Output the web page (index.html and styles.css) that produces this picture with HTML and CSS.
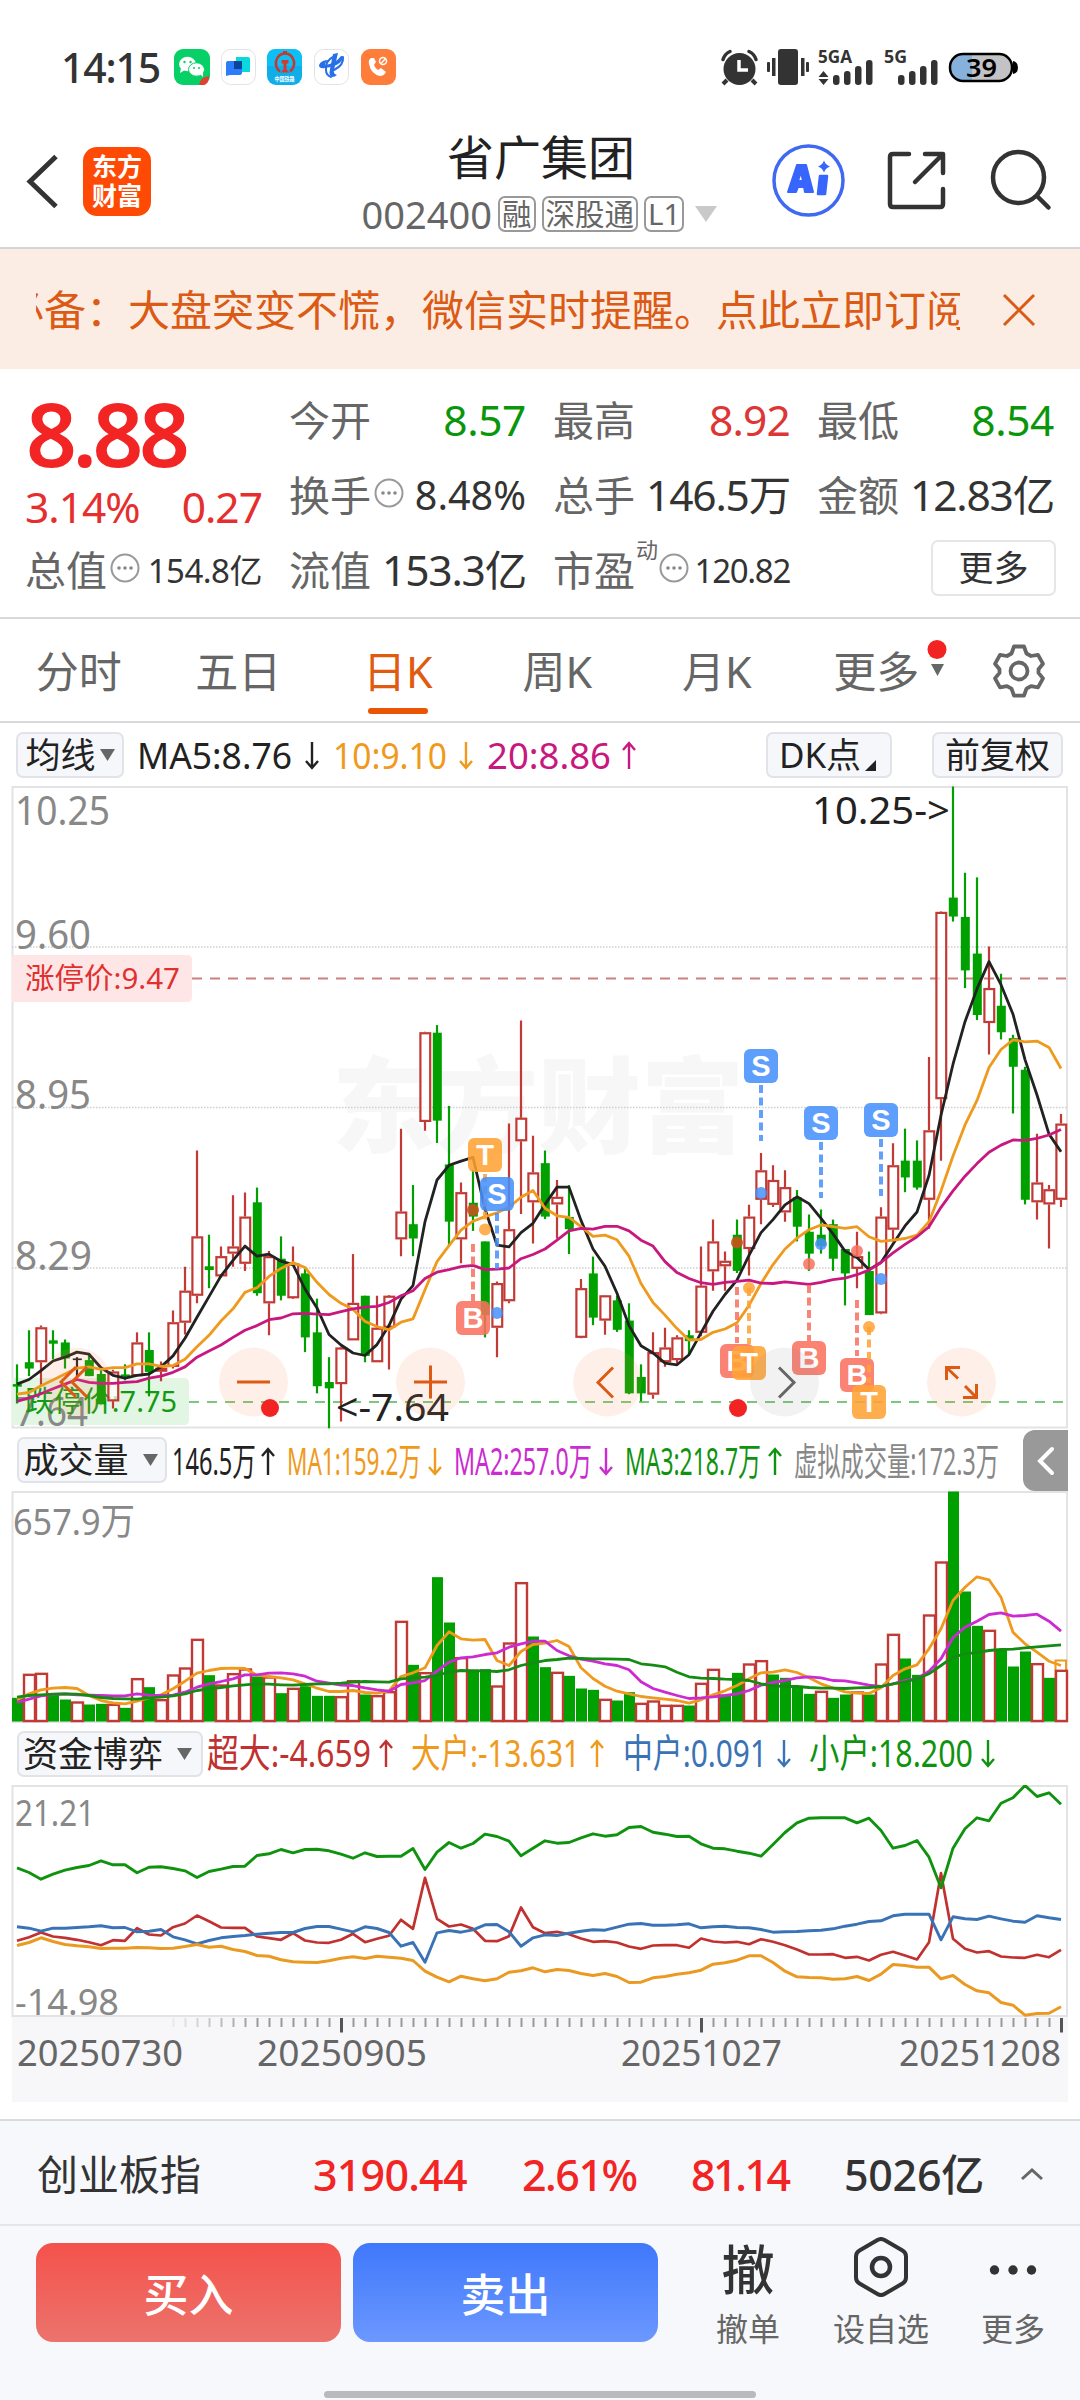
FILE: index.html
```html
<!DOCTYPE html>
<html lang="zh-CN">
<head>
<meta charset="utf-8">
<title>省广集团 002400</title>
<link rel="stylesheet" href="styles.css">
</head>
<body>
<div class="screen">

  <div class="status">
    <span class="clock">14:15</span>
    <svg class="apps" width="222" height="36" viewBox="174 49 222 36">
      <rect x="174" y="49" width="36" height="36" rx="9" fill="#06d066"/>
      <ellipse cx="187.500" cy="64" rx="8.500" ry="7.200" fill="#fff"/><path d="M181 68l-1 5 5-3z" fill="#fff"/>
      <circle cx="184.500" cy="62" r="1.200" fill="#06d066"/><circle cx="190.500" cy="62" r="1.200" fill="#06d066"/>
      <ellipse cx="196.500" cy="69.500" rx="8" ry="6.700" fill="#fff" stroke="#06d066" stroke-width="1"/><path d="M200 74l3 3v-5z" fill="#fff"/>
      <circle cx="194" cy="68" r="1" fill="#06d066"/><circle cx="199" cy="68" r="1" fill="#06d066"/>
      <path d="M199 85q1-8 10-9v2q-1 6-5 7z" fill="#e0402f"/>
      <rect x="221.500" y="49.500" width="34" height="35" rx="9" fill="#fff" stroke="#e3e3e5"/>
      <path d="M236 57h12q2 0 2 2v13h-14z" fill="#0bd8dc"/><path d="M228 61h14v12q0 2-2 2h-10l-4 1V63q0-2 2-2z" fill="#2c7dfb"/><path d="M234 61h8v8h-8z" fill="#07469c"/>
      <rect x="267" y="49" width="35" height="36" rx="9" fill="#10aee8"/><path d="M267 58q0-9 9-9h17q9 0 9 9v8h-35z" fill="#0cc0f5"/>
      <path d="M280 71.500q-5-4-4-10 2-8 9-8t9 8q1 6-4 10" fill="none" stroke="#c53a30" stroke-width="2.600"/><path d="M281.500 60h7v3.500h-2v6l3 3h-9l3-3v-6h-2z" fill="#d6392b"/><path d="M283 51h4v3h-4z" fill="#c53a30"/>
      <text x="274.500" y="80.500" font-size="6" font-weight="700" fill="#fff" textLength="20" lengthAdjust="spacingAndGlyphs">中国铁路</text>
      <rect x="314.500" y="49.500" width="34" height="35" rx="9" fill="#fff" stroke="#e3e3e5"/>
      <path d="M319 65q2-5 10-5-4 2-4 5 10-1 16-9 3 0 2 3-5 8-18 9-6 1-6-3z" fill="#2870ea"/>
      <path d="M343 57q1 8-9 13M333 57q-8 4-7 13 0 5 5 7" fill="none" stroke="#2870ea" stroke-width="2" stroke-linecap="round"/>
      <path d="M333 54l5-1-4 17q-1 4 3 5-5 4-7 0-1-2 0-6z" fill="#2870ea"/>
      <rect x="361" y="49" width="35" height="36" rx="9" fill="#ff7d3b"/>
      <path d="M371 58q-3 2-2 6 2 10 11 12 4 0 6-4l-5-4-3 2q-3-2-4-5l2-3-2-4z" fill="#fff"/><circle cx="383" cy="61" r="3.500" fill="none" stroke="#fff" stroke-width="1.500"/><path d="M381 63.500l4.500-5" stroke="#fff" stroke-width="1.300"/>
    </svg>
    <svg class="radio" width="308" height="40" viewBox="720 47 308 40">
      <g fill="#333">
        <circle cx="739.500" cy="69" r="16"/>
        <path d="M723 59.500q2-6 7-8M756 59.500q-2-6-7-8" fill="none" stroke="#333" stroke-width="3.500" stroke-linecap="round"/>
        <path d="M727 80l-4 4M752 80l4 4" stroke="#333" stroke-width="4"/>
        <path d="M739 60v10h9" stroke="#fff" stroke-width="3.500" fill="none"/>
        <rect x="778" y="49" width="20" height="36" rx="3"/><rect x="772" y="58" width="3.500" height="18"/><rect x="801" y="58" width="3.500" height="18"/><rect x="767" y="62" width="3" height="10" rx="1"/><rect x="806" y="62" width="3" height="10" rx="1"/>
        <text x="818" y="63" font-size="18" font-weight="700" textLength="34" lengthAdjust="spacingAndGlyphs">5GA</text>
        <text x="884" y="63" font-size="18" font-weight="700" textLength="23" lengthAdjust="spacingAndGlyphs">5G</text>
        <path d="M818.500 77h10l-5-6zM818.500 79h10l-5 6z"/>
        <rect x="833" y="75" width="6.500" height="10" rx="3"/><rect x="844" y="71" width="6.500" height="14" rx="3"/><rect x="855" y="66" width="6.500" height="19" rx="3"/><rect x="866" y="60" width="6.500" height="25" rx="3"/>
        <rect x="898" y="75" width="6.500" height="10" rx="3"/><rect x="909" y="71" width="6.500" height="14" rx="3"/><rect x="920" y="66" width="6.500" height="19" rx="3"/><rect x="931" y="60" width="6.500" height="25" rx="3"/>
      </g>
      <rect x="950" y="54" width="62" height="27" rx="13" fill="#c3c3c5"/>
      <path d="M972 54h-9a13 13.500 0 0 0 0 27h9z" fill="#86b1dd"/>
      <rect x="950" y="54" width="62" height="27" rx="13" fill="none" stroke="#000" stroke-width="2.500"/>
      <path d="M1013 61q5 1 5 6.500t-5 6.500z" fill="#000"/>
      <text x="966" y="76.500" font-size="26" font-weight="600" fill="#000" textLength="31" lengthAdjust="spacingAndGlyphs">39</text>
    </svg>
  </div>

  <header class="header">
    <div class="side">
      <svg class="back" width="40" height="70" viewBox="22 146 40 70"><path d="M56 156.500L30 181.500L56 206.500" fill="none" stroke="#333" stroke-width="5"/></svg>
      <div class="logo"><span>东方</span><span>财富</span></div>
    </div>
    <div class="title">
      <h1>省广集团</h1>
      <div class="code"><span class="num">002400</span><i>融</i><i>深股通</i><i>L1</i><svg width="22" height="16" viewBox="0 0 22 16"><path d="M0 0h22L11 16z" fill="#c9c9cb"/></svg></div>
    </div>
    <div class="side right">
    <svg class="tools" width="290" height="90" viewBox="770 137 290 90">
      <circle cx="808.500" cy="181.500" r="34.500" fill="none" stroke="#4069f2" stroke-width="3.500"/>
      <path d="M797 166h9l7 27h-8l-1-5h-6l-2 5h-8zM801 173l-3 9h5z" fill="#3865fb" stroke="#3865fb" stroke-width="2" stroke-linejoin="round" fill-rule="evenodd"/>
      <path d="M820 177h7l-2 18h-7z" fill="#3865fb" stroke="#3865fb" stroke-width="2.500" stroke-linejoin="round"/><path d="M824 161.500q1.500 4.500 6 6-4.500 1.500-6 6-1.500-4.500-6-6 4.500-1.500 6-6z" fill="#3865fb"/>
      <g fill="none" stroke="#333" stroke-width="4.500" stroke-linecap="round" stroke-linejoin="round">
        <path d="M909 155h-16q-3 0-3 3v47q0 3 3 3h47q3 0 3-3v-15M925 155h18v19M942 156l-27 27"/>
        <circle cx="1018.500" cy="178.500" r="25.500"/><path d="M1037 197l11.500 11.500"/>
      </g>
    </svg>
    </div>
  </header>

  <div class="notice">
    <div class="marquee"><span>必备：大盘突变不慌，微信实时提醒。点此立即订阅</span></div>
    <svg width="34" height="34" viewBox="0 0 34 34"><path d="M2 2L32 32M32 2L2 32" stroke="#db5a14" stroke-width="3"/></svg>
  </div>

  <section class="quote">
    <div class="last">
      <div class="price">8.88</div>
      <div class="change"><span>3.14%</span><span>0.27</span></div>
    </div>
    <div class="cell"><label>今开</label><b class="green">8.57</b></div>
    <div class="cell"><label>最高</label><b class="red">8.92</b></div>
    <div class="cell"><label>最低</label><b class="green">8.54</b></div>
    <div class="cell"><label>换手<svg class="info" width="30" height="30"><use href="#info"/></svg></label><b class="mid">8.48%</b></div>
    <div class="cell"><label>总手</label><b>146.5万</b></div>
    <div class="cell"><label>金额</label><b>12.83亿</b></div>
    <div class="cell"><label>总值<svg class="info" width="30" height="30"><use href="#info"/></svg></label><b class="small">154.8亿</b></div>
    <div class="cell"><label>流值</label><b>153.3亿</b></div>
    <div class="cell"><label>市盈<sup>动</sup><svg class="info" width="30" height="30"><use href="#info"/></svg></label><b class="small pe">120.82</b></div>
    <div class="cell end"><button class="more">更多</button></div>
  </section>

  <nav class="tabs">
    <a>分时</a><a>五日</a><a class="on">日K</a><a>周K</a><a>月K</a>
    <a class="drop">更多<svg width="20" height="46" viewBox="0 0 20 46"><circle cx="10" cy="9.500" r="9.500" fill="#f22323"/><path d="M4 24h13l-6.500 12z" fill="#666"/></svg></a>
    <svg class="gear" width="56" height="56" viewBox="-28 -28 56 56"><path d="M-5-24.500h10l2.500 7 4.500 2.500 7-1.200 5 9-4.500 5.500v3.600l4.500 5.500-5 9-7-1.200-4.500 2.500-2.500 7h-10l-2.500-7-4.500-2.500-7 1.200-5-9 4.500-5.500v-3.600l-4.500-5.500 5-9 7 1.200 4.500-2.500z" fill="none" stroke="#666" stroke-width="3.800" stroke-linejoin="round"/><circle r="8.500" fill="none" stroke="#666" stroke-width="3.800"/></svg>
  </nav>

  <div class="legend ma">
    <button class="chip">均线<svg width="15" height="12"><path d="M0 0h15L7.500 12z" fill="#666"/></svg></button>
    <svg class="values" id="maLegend" width="630" height="63" viewBox="130 722 630 63"></svg>
    <button class="chip dk">DK点<svg width="11" height="11"><path d="M11 0v11H0z" fill="#222"/></svg></button>
    <button class="chip">前复权</button>
  </div>

  <svg id="price" width="1080" height="643" viewBox="0 785 1080 643"></svg>

  <div class="legend vol">
    <button class="chip">成交量<svg width="15" height="12"><path d="M0 0h15L7.500 12z" fill="#666"/></svg></button>
    <svg class="values" id="volLegend" width="850" height="62" viewBox="170 1428 850 62"></svg>
    <div class="handle"><svg width="18" height="30" viewBox="0 0 18 30"><path d="M15 3L3 15L15 27" fill="none" stroke="#fff" stroke-width="4" stroke-linecap="round"/></svg></div>
  </div>

  <svg id="volume" width="1080" height="232" viewBox="0 1490 1080 232"></svg>

  <div class="legend flow">
    <button class="chip">资金博弈<svg width="15" height="12"><path d="M0 0h15L7.500 12z" fill="#666"/></svg></button>
    <svg class="values" id="flowLegend" width="860" height="62" viewBox="205 1722 860 62"></svg>
  </div>

  <svg id="flow" width="1080" height="317" viewBox="0 1784 1080 317"></svg>

  <footer>
    <div class="index">
      <span class="name">创业板指</span><span class="v1">3190.44</span><span class="v2">2.61%</span><span class="v3">81.14</span><span class="v4">5026亿</span>
      <svg width="24" height="14" viewBox="0 0 24 14"><path d="M2 12L12 3L22 12" fill="none" stroke="#666" stroke-width="3"/></svg>
    </div>
    <div class="actions">
      <button class="buy">买入</button><button class="sell">卖出</button>
      <div class="act a1"><b>撤</b><span>撤单</span></div>
      <div class="act a2"><svg width="56" height="60" viewBox="-28 -30 56 60"><path d="M-3.500-27q3.500-2 7 0l18 10.500q3.500 2 3.500 6v21q0 4-3.500 6L3.500 27q-3.500 2-7 0l-18-10.500q-3.500-2-3.500-6v-21q0-4 3.500-6z" fill="none" stroke="#333" stroke-width="4"/><circle r="9" fill="none" stroke="#333" stroke-width="4.500"/></svg><span>设自选</span></div>
      <div class="act a3"><svg width="56" height="60" viewBox="-28 -30 56 60"><g fill="#333"><circle cx="-18.500" cy="3" r="4.700"/><circle cy="3" r="4.700"/><circle cx="18.500" cy="3" r="4.700"/></g></svg><span>更多</span></div>
    </div>
    <div class="homebar"></div>
  </footer>
</div>

<svg width="0" height="0" class="defs"><symbol id="info" viewBox="0 0 30 30"><circle cx="15" cy="15" r="13.500" fill="none" stroke="#999" stroke-width="2"/><g fill="#888"><circle cx="9" cy="15" r="1.800"/><circle cx="15" cy="15" r="1.800"/><circle cx="21" cy="15" r="1.800"/></g></symbol></svg>
<script src="charts.js"></script>
</body>
</html>
```
FILE: styles.css
```css
* { box-sizing: border-box; }
body { margin: 0; background: #fff; font-family: "Noto Sans", "Noto Sans CJK SC", sans-serif; color: #333; }
button { font: inherit; color: inherit; padding: 0; border: 0; }
svg { display: block; flex: none; }
.defs { position: absolute; }
.screen { width: 1080px; height: 2400px; display: flex; flex-direction: column; overflow: hidden; }
.screen > * { flex: none; }

.status { height: 120px; padding: 14px 52px 0 61px; display: flex; align-items: center; }
.clock { width: 113px; font-size: 41px; font-weight: 500; letter-spacing: -1.2px; line-height: 1; }
.radio { margin-left: auto; }

.header { height: 129px; border-bottom: 2px solid #d3d4d9; display: flex; align-items: center; padding: 0 20px 5px 22px; }
.side { flex: 1 1 0; display: flex; align-items: center; }
.side.right { justify-content: flex-end; }
.logo { width: 68px; height: 69px; margin-left: 21px; border-radius: 14px; background: #ff4a05; color: #fff; display: flex; flex-direction: column; align-items: center; justify-content: center; font-weight: 700; font-size: 25px; line-height: 29px; }
.title { display: flex; flex-direction: column; align-items: center; padding-top: 7px; }
h1 { margin: 0; font-size: 47px; line-height: 58px; font-weight: 400; color: #222; }
.code { display: flex; align-items: center; height: 56px; gap: 6px; color: #666; margin-left: -3px; }
.code .num { font-size: 38px; }
.code i { font-style: normal; font-size: 29.5px; line-height: 32px; height: 36px; border: 2px solid #999; border-radius: 7px; padding: 0 2px; }
.code svg { margin-left: 5px; }

.notice { height: 120px; background: #fcede4; display: flex; align-items: center; padding: 1px 44px 0 36px; justify-content: space-between; color: #db5a14; }
.marquee { width: 924px; overflow: hidden; white-space: nowrap; font-size: 42px; line-height: 60px; }
.marquee span { margin-left: -34px; }

.quote { height: 250px; border-bottom: 2px solid #d9d9db; display: grid; grid-template-columns: 237px 237px 237px 237px; grid-template-rows: 75px 75px 75px; column-gap: 27px; padding: 14px 26px 0 25px; }
.last { grid-row: span 2; color: #f22424; }
.price { font-size: 89px; line-height: 99px; font-weight: 600; letter-spacing: -4.5px; padding-left: 1px; }
.change { display: flex; justify-content: space-between; font-size: 42.5px; line-height: 50px; letter-spacing: -1px; color: #e62e2e; }
.cell { display: flex; align-items: center; justify-content: space-between; white-space: nowrap; }
.cell label { display: flex; align-items: center; font-size: 41px; color: #666; line-height: 1; position: relative; }
.cell b { font-weight: 400; font-size: 42.5px; letter-spacing: -1.2px; line-height: 1; color: #333; }
.cell b.green { color: #0a960a; letter-spacing: -.4px; }
.cell b.red { color: #dd3636; letter-spacing: -.8px; }
.cell b.mid { font-size: 39.5px; letter-spacing: 0; }
.cell b.small { font-size: 33px; letter-spacing: -.5px; }
.cell b.pe { letter-spacing: -1.3px; }
.cell .info { margin-left: 3px; margin-top: -6px; }
.cell sup { font-size: 22px; align-self: flex-start; margin-top: -12px; line-height: 1; margin-left: 1px; }
.cell sup + .info { margin-left: 1px; }
.cell.end { justify-content: flex-end; }
.more { width: 125px; height: 56px; border: 2px solid #e6e6e8; border-radius: 7px; background: #fff; font-size: 35px; line-height: 50px; margin-right: -2px; margin-top: -6px; }

.tabs { height: 104px; border-bottom: 2px solid #d9d9db; display: flex; color: #666; font-size: 43px; line-height: 105px; }
.tabs a { width: 159.5px; text-align: center; position: relative; height: 101px; left: -1px; }
.tabs a.on { color: #e05a10; }
.tabs a.on::after { content: ""; position: absolute; left: 50px; bottom: 6px; width: 60px; height: 6px; border-radius: 3px; background: #ea5504; }
.tabs .drop svg { position: absolute; left: 130px; top: 21px; }
.gear { margin: 24px 0 0 34px; }

.legend { display: flex; align-items: center; position: relative; }
.chip { height: 46px; background: #f6f7fa; border: 2px solid #e2e3e8; border-radius: 7px; font-size: 35px; line-height: 42px; color: #222; display: flex; align-items: center; justify-content: center; gap: 4px; flex: none; }
.ma { height: 63px; padding-left: 16px; }
.ma .chip:first-child { width: 108px; }
.ma .values { margin-right: 6px; margin-left: 6px; }
.chip.dk { width: 126px; margin-right: 40px; padding-right: 3px; }
.chip.dk svg { align-self: flex-end; margin-bottom: 5px; }
.ma .chip:last-child { width: 131px; }
.vol { height: 62px; padding-left: 17px; }
.vol .chip { width: 150px; gap: 14px; padding-right: 3px; }
.vol .values { margin-left: 3px; }
.handle { position: absolute; right: 12px; top: 1px; width: 45px; height: 61px; background: #999; border-radius: 12px 0 0 12px; display: flex; align-items: center; justify-content: center; }
.flow { height: 62px; padding-left: 17px; }
.flow .chip { width: 186px; gap: 14px; padding-right: 5px; }
.flow .values { margin-left: 2px; }

footer { margin-top: 17px; height: 282px; background: #f7f8fb; border-top: 2px solid #dadbdc; position: relative; }
.index { height: 105px; border-bottom: 2px solid #e5e6e9; display: flex; align-items: center; padding: 3px 36px 0 37px; font-size: 43px; line-height: 1; white-space: nowrap; font-weight: 500; color: #f22424; }
.index .name { font-size: 41px; font-weight: 400; color: #333; width: 276px; }
.index .v1 { width: 209px; letter-spacing: -.8px; }
.index .v2 { width: 169px; letter-spacing: -1.5px; }
.index .v3 { width: 153px; letter-spacing: -2.5px; }
.index .v4 { width: 176px; color: #333; letter-spacing: -.3px; }
.actions { display: flex; padding: 17px 0 0 36px; }
.buy, .sell { width: 305px; height: 99px; border-radius: 17px; color: #fff; font-size: 45px; font-weight: 500; }
.buy { background: linear-gradient(#f4524b, #ec736d); margin-right: 12px; }
.sell { background: linear-gradient(#3f78fb, #6c98ff); }
.act { display: flex; flex-direction: column; align-items: center; font-size: 32px; color: #666; line-height: 36px; height: 111px; justify-content: space-between; margin-top: -7px; }
.act b { font-size: 53px; font-weight: 500; color: #333; line-height: 64px; margin-top: 2px; }
.act svg { margin-top: 1px; }
.a1 { width: 70px; margin-left: 55px; }
.a2 { width: 100px; margin-left: 48px; }
.a3 { width: 70px; margin-left: 47px; }
.homebar { position: absolute; left: 324px; bottom: 3px; width: 432px; height: 7px; border-radius: 4px; background: #b9babc; }
```
FILE: charts.js
```js
const RED = '#c23a36', GREEN = '#00a000', LINE_GREEN = '#0f930f', ORANGE = '#ef9a1c';
const cx = i => 17 + 12 * i;

function line(vals, y, color, w) {
  const pts = vals.map((v, i) => cx(i) + ',' + y(v).toFixed(1)).join(' ');
  return `<polyline points="${pts}" fill="none" stroke="${color}" stroke-width="${w}" stroke-linejoin="round"/>`;
}
function text(x, y, size, color, s, width) {
  const fit = width ? ` textLength="${width}" lengthAdjust="spacingAndGlyphs"` : '';
  return `<text x="${x}" y="${y}" font-size="${size}" fill="${color}"${fit}>${s}</text>`;
}
function arrow(x, base, dir, color) {
  const t = base - 27;
  const d = dir > 0 ? `M${x} ${base}V${t + 1}M${x - 6} ${t + 8}L${x} ${t + 1}L${x + 6} ${t + 8}`
                    : `M${x} ${t}V${base - 1}M${x - 6} ${base - 8}L${x} ${base - 1}L${x + 6} ${base - 8}`;
  return `<path d="${d}" fill="none" stroke="${color}" stroke-width="2.4"/>`;
}
const put = (id, s) => { document.getElementById(id).innerHTML = s; };
const frame = (y, h) => `<rect x="12.5" y="${y}" width="1054.5" height="${h}" fill="none" stroke="#e3e3e5" stroke-width="2"/>`;

/* legends: x, text, width, arrow x, direction, colour */
function legend(rows, base, size) {
  return rows.map(r => text(r[0], base, size, r[5], r[1], r[2]) + (r[3] ? arrow(r[3], base, r[4], r[5]) : '')).join('');
}
put('maLegend', legend([
  [137, 'MA5:8.76', 155, 312, -1, '#222'],
  [333, '10:9.10', 114, 466, -1, ORANGE],
  [487, '20:8.86', 124, 629, 1, '#c8187f']], 768, 37));
put('volLegend', legend([
  [172, '146.5万', 84, 268, 1, '#222'],
  [287, 'MA1:159.2万', 134, 435, -1, ORANGE],
  [454, 'MA2:257.0万', 138, 606, -1, '#cb2bd0'],
  [625, 'MA3:218.7万', 136, 775, 1, LINE_GREEN],
  [794, '虚拟成交量:172.3万', 205, 0, 0, '#888']], 1474, 38));
put('flowLegend', legend([
  [207, '超大:-4.659', 164, 386, 1, '#c0312f'],
  [411, '大户:-13.631', 169, 597, 1, ORANGE],
  [623, '中户:0.091', 144, 784, -1, '#3a73b5'],
  [809, '小户:18.200', 164, 988, -1, LINE_GREEN]], 1766, 39));

/* daily candles: colour, high, low, body top, body bottom */
const candles = `g1387-1480-1434-1440 g1306-1415-1382-1397 r1295-1440-1299-1382 g1306-1375-1330-1338 g1328-1397-1335-1373 k1370-1415-1373-1377 g1365-1415-1377-1415 g1397-1482-1410-1482 r1400-1492-1404-1475 g1387-1425-1411-1416 r1311-1415-1335-1415 g1311-1463-1353-1405 r1380-1427-1395-1404 r1259-1397-1287-1393 r1155-1316-1212-1288 r879-1242-1083-1224 g1079-1206-1154-1163 r1107-1181-1130-1178 r985-1155-1107-1124 r979-1165-1036-1148 g967-1224-1002-1218 r1118-1318-1130-1242 g1083-1235-1136-1224 r1107-1232-1147-1230 g1160-1358-1171-1323 g1231-1456-1311-1439 g1370-1539-1429-1444 r1345-1523-1347-1434 r1125-1330-1241-1330
g1224-1382-1224-1367 r1224-1382-1300-1382 r1222-1399-1224-1300 r827-1130-1024-1090 g961-1130-1054-1088 r597-832-598-811 g581-861-599-808 g773-1105-912-1048 r955-1147-978-1090 g925-1070-1003-1036 g1095-1323-1095-1270 r1190-1370-1194-1300 r815-1242-1066-1237 r570-1030-801-857 r844-1100-931-1002 g879-1042-909-1036 r949-1088-989-1007 g961-1125-1037-1066 r1184-1325-1206-1324 g1131-1294-1171-1276 r1222-1317-1223-1283 g1224-1310-1235-1305 g1242-1458-1283-1456 g1387-1475-1417-1456 r1311-1469-1358-1459 r1300-1393-1347-1382 r1318-1385-1323-1377 g1306-1365-1318-1332 r1107-1320-1200-1312 r1043-1212-1095-1166
r1119-1212-1141-1154 g1043-1170-1079-1165 r1008-1176-1036-1113 r885-1054-926-996 r914-1013-949-1008 r926-1048-966-1026 g973-1095-990-1060 g1031-1165-1072-1124 g1019-1124-1079-1106 g1043-1165-1054-1136 g1113-1247-1113-1171 r1072-1206-1130-1160 g1119-1270-1165-1270 r1014-1268-1036-1266 r862-1095-914-1067 g827-978-903-943 g855-972-903-967 r657-1065-831-996 r311-903-312-757 g14-335-278-323 g219-493-324-451 g230-569-411-557 r394-651-493-576 g459-615-535-598 g604-791-612-680 g680-1007-687-996 r839-1043-955-1002 r961-1112-971-1007 r792-1013-815-996`.split(/\s+/);
const ma5 = [1434,1423,1402,1379,1370,1358,1363,1395,1413,1420,1413,1410,1393,1367,1325,1275,1226,1177,1140,1106,1130,1125,1142,1150,1208,1253,1316,1341,1360,1366,1340,1295,1232,1200,1048,949,914,904,895,1018,1104,1108,1074,1052,1007,966,966,1045,1113,1154,1218,1295,1343,1360,1384,1388,1364,1312,1261,1221,1187,1128,1074,1043,1008,989,1005,1040,1077,1118,1133,1162,1145,1101,1058,1025,938,795,674,573,495,430,485,555,663,747,840,882];
const ma10 = [1458,1454,1438,1424,1410,1396,1393,1399,1395,1395,1386,1386,1392,1390,1375,1345,1318,1284,1255,1216,1205,1178,1159,1145,1157,1192,1221,1242,1256,1285,1297,1305,1287,1279,1210,1143,1105,1068,1047,1036,1027,1014,990,974,1016,1034,1038,1060,1083,1080,1091,1130,1195,1240,1270,1302,1329,1328,1311,1303,1288,1247,1195,1150,1113,1087,1067,1056,1060,1064,1060,1084,1095,1092,1088,1080,1048,975,892,818,760,682,639,616,621,619,634,684];
const ma20 = [1475,1467,1457,1445,1434,1423,1430,1432,1432,1430,1428,1420,1415,1406,1393,1370,1355,1341,1323,1306,1295,1281,1277,1267,1266,1268,1269,1262,1255,1251,1249,1240,1224,1212,1183,1168,1162,1155,1152,1162,1161,1158,1136,1126,1113,1092,1070,1064,1066,1059,1059,1070,1092,1106,1143,1169,1183,1193,1197,1192,1190,1187,1194,1195,1191,1194,1197,1192,1186,1182,1174,1163,1145,1122,1102,1084,1060,1014,975,940,910,883,866,854,855,850,842,829];
const py = v => 780 + (v - 1) / 2.376;

let s = '';
s += `<text x="332" y="1144" font-size="104" font-weight="900" font-family="Noto Sans CJK SC" fill="#f7f7f7" textLength="412" lengthAdjust="spacingAndGlyphs">东方财富</text>`;
s += frame(786, 640.5);
[946, 1106.5, 1267].forEach(y => s += `<path d="M12 ${y}H1067" stroke="#cfcfd2" stroke-width="1.5" stroke-dasharray="1.5 1.5"/>`);
s += `<path d="M192 977.500H1066" stroke="#cc8080" stroke-width="2" stroke-dasharray="10 8"/>`;
s += `<path d="M189 1401H1066" stroke="#7cc77c" stroke-width="2" stroke-dasharray="10 8"/>`;
s += `<path d="M12 954H187q5 0 5 5V996q0 5-5 5H12z" fill="#ffe6e6"/>` + text(25, 988, 29, '#e03030', '涨停价:9.47', 155);
s += `<path d="M12 1377H184q5 0 5 5V1419q0 5-5 5H12z" fill="#e3f5e3"/>`;
[[824, '10.25', 95], [947.5, '9.60', 76], [1107.5, '8.95', 76], [1268.5, '8.29', 77], [1424.5, '7.64', 73]].forEach(r => s += text(15, r[0], 39.5, '#888', r[1], r[2]));
s += text(25, 1411, 29, '#129a12', '跌停价:7.75', 152);
candles.forEach((c, i) => {
  const [hi, lo, top, bot] = c.slice(1).split('-').map(v => py(+v));
  const x = cx(i);
  if (c[0] === 'r') {
    const h = Math.max(bot - top - 2, 2);
    s += `<path d="M${x} ${hi}V${top}M${x} ${bot}V${lo}" stroke="${RED}" stroke-width="2.2"/><rect x="${x - 4.6}" y="${top + 1}" width="9.8" height="${h}" fill="#fff" fill-opacity=".7" stroke="${RED}" stroke-width="2.200"/>`;
  } else {
    const col = c[0] === 'k' ? '#222' : GREEN;
    s += `<path d="M${x} ${hi}V${lo}" stroke="${col}" stroke-width="2.2"/><rect x="${x - 4.2}" y="${top}" width="9" height="${bot - top}" fill="${col}"/>`;
  }
});
s += line(ma5, py, '#222', 2.8) + line(ma10, py, ORANGE, 2.8) + line(ma20, py, '#c8187f', 2.8);
s += text(812, 822.5, 39, '#222', '10.25-&gt;', 138) + text(336, 1419.500, 39, '#222', '&lt;-7.64', 113);

/* trade marks */
const tone = { S: '#4690fb', B: '#f9705f', T: '#ffa233' };
function mark(k, x, y, from, to, dot) {
  s += `<path d="M${x} ${from}V${to}" stroke="${tone[k]}" stroke-width="4" stroke-dasharray="8 4.5" opacity=".85"/>`;
  if (dot) s += `<circle cx="${x}" cy="${dot}" r="6" fill="${tone[k]}" opacity=".85"/>`;
  s += `<rect x="${x - 17}" y="${y - 17}" width="34" height="34" rx="6" fill="${tone[k]}" opacity=".87"/>`;
  s += `<text x="${x}" y="${y + 10}" font-size="29" font-weight="700" fill="#fff" text-anchor="middle" font-family="Liberation Sans">${k}</text>`;
}
mark('T', 485, 1154, 1173, 1222, 1228.5);
mark('B', 473, 1317, 1243, 1300);
s += `<circle cx="473" cy="1209" r="6" fill="#c8531d" opacity=".9"/>`;
mark('S', 497, 1193, 1212, 1268, 1312);
mark('S', 761, 1065, 1084, 1140, 1192);
mark('S', 821, 1122, 1141, 1197, 1243);
mark('S', 881, 1119, 1138, 1195, 1278);
mark('B', 737, 1360, 1286, 1342);
s += `<circle cx="737" cy="1241.5" r="6" fill="#c8531d" opacity=".9"/>`;
mark('T', 749, 1362, 1287, 1343, 1287);
mark('B', 809, 1357, 1284, 1340, 1263);
mark('B', 857, 1374, 1299, 1355, 1250);
mark('T', 869, 1401, 1326, 1382, 1326);

/* chart controls */
[76.5, 253.5, 430.5, 607.5, 784.5, 961.5].forEach((x, i) => s += `<circle cx="${x}" cy="1381" r="34.5" fill="${i === 4 ? '#888' : '#f98b50'}" opacity="${i === 4 ? .11 : .13}"/>`);
s += `<g fill="none" stroke="#dd5a14" stroke-width="3"><path d="M76 1366L61 1381L76 1396M87 1366L72 1381L87 1396M237 1381H270M414 1381H447M430.5 1364.5V1397.5M613 1366.5L598 1381.5L613 1396.5"/>
<path d="M946.5 1379V1366.5H960M946.5 1366.5L958 1377.5M976.5 1383V1396.5H963M976.5 1396.5L965 1385"/></g><path d="M779 1366.5L794 1381.5L779 1396.5" fill="none" stroke="#666" stroke-width="3"/>`;
s += `<circle cx="270" cy="1407" r="9" fill="#f22323"/><circle cx="738" cy="1407" r="9" fill="#f22323"/>`;
put('price', s);

/* volume */
const vols = 'g832 r760 r757 g822 g837 r843 g852 g850 r850 g862 r773 g800 r836 r762 r741 r655 g764 r792 r758 r744 g768 r768 g818 r802 g797 g826 g826 r827 r779 g822 r824 r812 r601 g733 r755 g470 g606 r710 g747 g746 r795 r666 r485 g648 g740 r754 g766 g804 g808 r835 g840 g815 r847 r840 r853 r853 g855 r787 r745 g822 g757 r729 r719 g762 g772 g796 g820 r811 g832 g822 r813 g822 r729 r640 g714 g763 r582 r423 g213 g513 g616 r628 g687 g738 g693 r728 g772 r748'.split(' ');
const v1 = [838,820,808,803,801,804,825,840,847,850,842,832,823,805,782,758,750,744,743,744,764,768,772,778,790,803,813,813,810,816,818,811,768,757,742,675,634,655,659,657,720,735,693,672,668,660,678,742,774,797,812,820,828,832,836,840,848,838,823,811,795,775,757,755,748,756,772,790,802,814,818,819,802,765,745,733,685,625,540,500,469,478,530,635,670,695,722,735];
const v2 = [846,836,826,822,820,823,824,825,826,826,820,824,825,824,815,800,790,783,775,763,763,758,757,760,767,782,788,794,795,802,808,812,792,787,780,752,725,712,709,702,697,680,670,662,662,690,706,716,722,730,735,748,784,804,815,825,834,832,829,825,820,810,794,786,780,772,769,772,780,781,787,794,798,790,780,775,752,715,652,620,602,582,577,587,585,581,602,632];
const v3 = [830,825,823,821,820,821,825,831,834,835,836,832,830,826,820,810,805,801,796,793,790,791,793,794,792,790,790,788,785,783,784,785,775,772,770,765,755,750,751,751,753,748,735,727,720,717,713,714,715,715,716,717,730,734,739,755,769,773,774,776,777,780,790,796,798,798,801,803,803,804,802,801,798,790,784,775,760,735,710,700,696,690,687,686,682,679,676,673];
const vy = v => 1419.5 + v / 3;
s = frame(1491, 230) + text(13, 1534, 37, '#888', '657.9万', 122);
s += `<rect x="1055.5" y="${vy(720)}" width="10.5" height="60" fill="#fff" stroke="${ORANGE}" stroke-width="2"/>`;
vols.forEach((v, i) => {
  const x = cx(i), t = vy(+v.slice(1));
  s += v[0] === 'r'
    ? `<rect x="${x - 5}" y="${t + 1}" width="11" height="${1719 - t}" fill="#fff" stroke="${RED}" stroke-width="2.4"/>`
    : `<rect x="${x - 5}" y="${t}" width="11" height="${1720.5 - t}" fill="${GREEN}"/>`;
});
s += line(v1, vy, ORANGE, 2.8) + line(v2, vy, '#cb2bd0', 2.8) + line(v3, vy, '#148c14', 2.8);
put('volume', s);

/* capital flow */
const small = [292,306,326,311,299,291,285,271,283,283,307,290,289,294,301,321,303,296,288,287,255,250,237,247,237,236,241,251,263,247,258,257,257,234,297,245,216,233,219,191,198,212,256,233,211,218,216,202,190,197,193,171,168,185,191,198,197,220,233,235,242,248,257,222,186,157,143,142,142,142,157,143,180,233,225,210,260,352,233,175,142,151,98,82,45,78,67,101];
const huge = [511,500,486,498,502,508,515,524,509,511,473,492,495,470,459,435,452,471,472,472,498,503,508,488,510,516,517,508,490,515,505,496,448,475,322,445,468,462,475,511,512,497,411,470,488,484,491,504,514,512,516,528,535,525,524,524,532,504,513,516,514,521,506,514,524,537,552,552,551,562,559,570,553,544,555,567,515,308,505,535,546,542,558,561,562,553,560,538];
const mid = [469,473,482,473,473,471,469,466,472,471,484,482,477,499,508,520,510,502,498,495,491,488,486,486,474,468,468,476,484,469,474,486,527,516,575,487,480,485,478,463,462,484,527,502,493,495,488,482,478,479,470,461,459,464,464,463,460,472,469,467,471,472,477,485,484,483,481,479,475,467,461,453,451,436,431,431,431,508,439,445,447,437,445,452,455,436,442,447];
const big = [525,516,502,513,522,526,529,534,533,533,531,532,534,533,528,522,530,527,537,543,555,557,568,574,575,576,571,563,559,564,557,560,563,570,602,620,634,617,625,631,625,605,601,592,604,597,600,609,615,609,618,636,635,622,618,611,607,599,581,577,569,556,556,576,602,619,621,622,626,625,618,630,611,582,585,590,590,625,615,642,661,667,696,704,734,729,728,709];
const fy = v => 1769.5 + v / 3;
s = `<rect x="12" y="2015" width="1056" height="86" fill="#f7f7fa"/>` + frame(1785, 230);
s += text(15, 1824.500, 37, '#888', '21.21', 80) + text(15, 2013.500, 37, '#888', '-14.98', 104);
s += line(huge, fy, '#c0312f', 2.7) + line(small, fy, LINE_GREEN, 2.9) + line(mid, fy, '#3a73b5', 2.9) + line(big, fy, '#ea9a20', 3);
for (let i = 13; i < 88; i++) {
  const major = i === 27 || i === 57 || i === 87;
  s += `<path d="M${cx(i) + .5} 2017V${major ? 2031.5 : 2026}" stroke="${major ? '#555' : '#999'}" stroke-width="${major ? 3 : 2}" opacity="${Math.min(1, (i - 12) / 8)}"/>`;
}
[[17, '20250730', 166], [257, '20250905', 170], [621, '20251027', 161], [899, '20251208', 162]].forEach(d => s += text(d[0], 2065, 37, '#666', d[1], d[2]));
put('flow', s);
```
